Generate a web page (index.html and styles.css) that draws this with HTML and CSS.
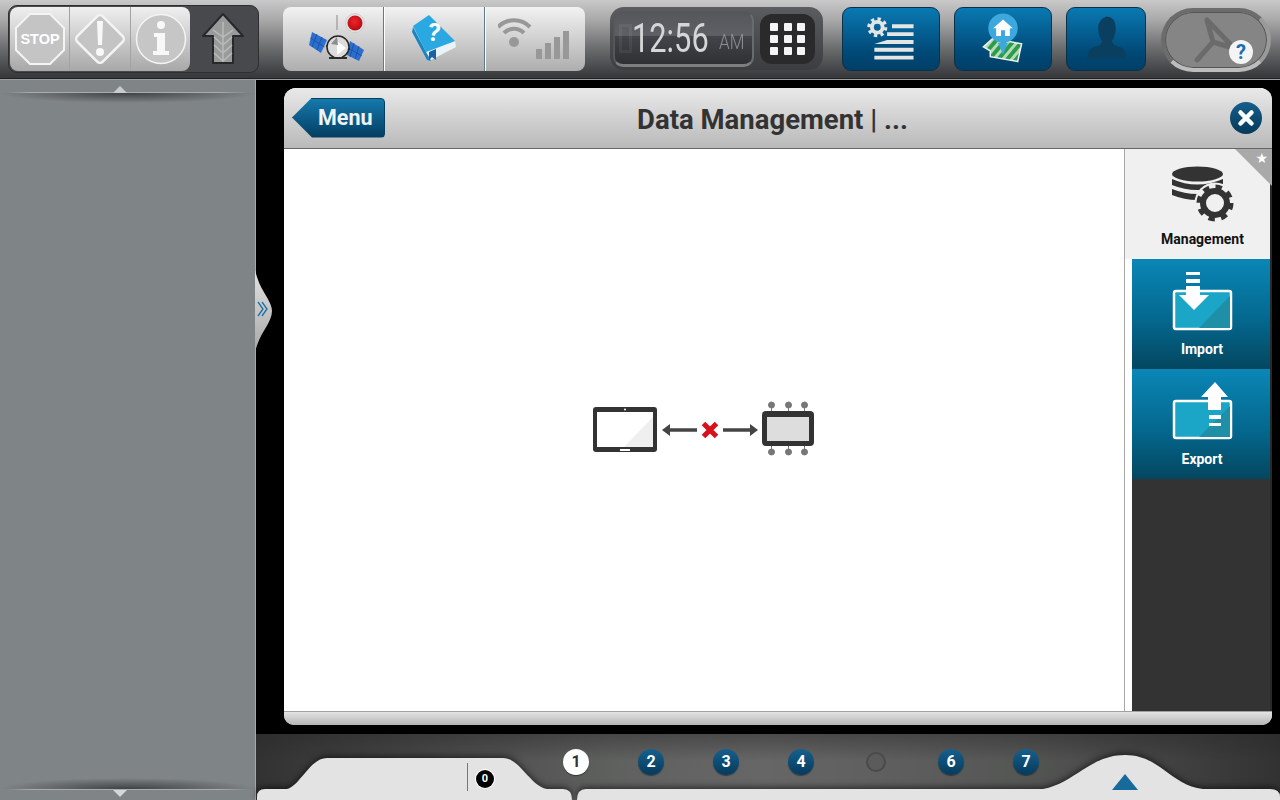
FILE: index.html
```html
<!DOCTYPE html>
<html lang="en">
<head>
  <meta charset="UTF-8" />
  <title>Data Management</title>
  <link rel="stylesheet" href="styles.css">
</head>
<body>
  <div class="app">
    <!-- Top toolbar -->
    <header class="topbar">
      <div class="alerts">
        <div class="alerts-light">
          <div class="alert-cell">
            <svg width="56" height="56" viewBox="0 0 56 56">
              <polygon points="18,3 38,3 52,17 52,39 38,53 18,53 4,39 4,17" fill="#c4c4c4" stroke="#f4f4f4" stroke-width="2"/>
              <text x="28" y="33" class="stop-text">STOP</text>
            </svg>
          </div>
          <div class="alert-cell">
            <svg width="56" height="56" viewBox="0 0 56 56">
              <rect x="10" y="10" width="36" height="36" rx="4" transform="rotate(45 28 28)" fill="#c4c4c4" stroke="#f4f4f4" stroke-width="2.5"/>
              <path d="M25 10h6l-1 24h-4z" fill="#f8f8f8"/>
              <circle cx="28" cy="41" r="4" fill="#f8f8f8"/>
            </svg>
          </div>
          <div class="alert-cell">
            <svg width="56" height="56" viewBox="0 0 56 56">
              <circle cx="29" cy="28" r="24.5" fill="#c6c6c6" stroke="#f4f4f4" stroke-width="1.5"/>
              <circle cx="29" cy="14" r="4" fill="#f8f8f8"/>
              <path d="M22 22h11v18h4v4H21v-4h4V26h-3z" fill="#f8f8f8"/>
            </svg>
          </div>
        </div>
        <div class="alert-arrow">
          <svg width="44" height="54" viewBox="0 0 44 54">
            <path d="M22 2 42 24H32V51H12V24H2Z" fill="#999b9b" stroke="#27282a" stroke-width="2" stroke-linejoin="round"/>
            <path d="M22 10v40M13 25l9 8 9-8M13 33l9 8 9-8M13 41l9 8 9-8M12 18l10 7 10-7" fill="none" stroke="#b9bbbb" stroke-width="1.5"/>
          </svg>
        </div>
      </div>

      <div class="status">
        <div class="status-cell">
          <svg width="75" height="60" viewBox="296 9 75 60">
            <defs>
              <radialGradient id="recDot" cx=".45" cy=".4" r=".6">
                <stop offset="0" stop-color="#f0242c"/>
                <stop offset="1" stop-color="#b50a12"/>
              </radialGradient>
            </defs>
            <polygon points="312,32 327,40 321,53 309,45" fill="#2a6fd0"/>
            <path d="M317 34l-5 13M322 37l-5 13M310.500 38l14 9" stroke="#1b4c96" stroke-width=".8"/>
            <polygon points="350,41 364,50 359,61 347,55" fill="#2a6fd0"/>
            <path d="M354 43l-4 14M359 46l-4 13M348 48l14 8" stroke="#1b4c96" stroke-width=".8"/>
            <path d="M326 46l24 3" stroke="#333" stroke-width="2"/>
            <circle cx="338" cy="47" r="11" fill="#dcdcdc" stroke="#262626" stroke-width="1.500"/>
            <path d="M329 57h18v2h-18z" fill="#2c2c2c"/>
            <path d="M337 41l9 7-9 7z" fill="#fff"/>
            <path d="M331 44l6-7 1 8z" fill="#8d8d8d"/>
            <path d="M337 15v15" stroke="#888"/>
            <circle cx="355" cy="23" r="9.500" fill="#e2e2e2" stroke="#bbb" stroke-width=".5"/>
            <circle cx="355" cy="23" r="7.500" fill="url(#recDot)"/>
          </svg>
        </div>
        <div class="status-cell">
          <svg width="75" height="60" viewBox="396 9 75 60">
            <polygon points="425,52 430,60 455,47 454,41" fill="#e8f4fa"/>
            <polygon points="412,27 425,52 430,61 426,60 411,32" fill="#1a86bf"/>
            <polygon points="412,26 428,15 454,41 425,52" fill="#2aa8e2"/>
            <polygon points="428,52 435,49 435,60 431,57 428,60" fill="#1a62a5"/>
            <text x="433" y="41" class="book-mark" transform="rotate(8 433 33)">?</text>
          </svg>
        </div>
        <div class="status-cell">
          <svg width="75" height="60" viewBox="497 9 75 60">
            <circle cx="513" cy="42" r="5" fill="#989898"/>
            <path d="M503 33a14 14 0 0 1 20 0M497 27a22.500 22.500 0 0 1 32 0" fill="none" stroke="#989898" stroke-width="4"/>
            <path d="M535 49h6v10h-6zM544 43h6v16h-6zM553 37h6v22h-6zM562 31h6v28h-6z" fill="#989898"/>
          </svg>
        </div>
      </div>

      <div class="clock">
        <div class="clock-screen">
          <span class="clock-ghost"></span>
          <span class="clock-time">12:56</span>
          <span class="clock-ampm">AM</span>
        </div>
        <div class="clock-grid">
          <i></i><i></i><i></i><i></i><i></i><i></i><i></i><i></i><i></i>
        </div>
      </div>

      <div class="tool tool-wide">
        <svg width="98" height="64" viewBox="842 7 98 64">
          <circle cx="877" cy="27" r="5.500" fill="none" stroke="#e4e6e6" stroke-width="4"/>
          <circle cx="877" cy="27" r="8.500" fill="none" stroke="#e4e6e6" stroke-width="3.500" stroke-dasharray="3.300 3.370"/>
          <path d="M892 24h22v4h-22zM887 32h27v4h-27zM874 44l13-4h27v4zM874 48h40v4h-40zM874 56h40v4h-40z" fill="#e4e6e6"/>
        </svg>
      </div>
      <div class="tool tool-wide">
        <svg width="98" height="64" viewBox="954 7 98 64">
          <defs>
            <pattern id="mapStripes" width="7" height="7" patternUnits="userSpaceOnUse" patternTransform="rotate(40)">
              <rect width="7" height="7" fill="#2c9c4c"/>
              <rect width="3" height="7" fill="#b4dcb8"/>
            </pattern>
          </defs>
          <polygon points="983,47 993,38 1022,44 1018,62 990,57 990,51" fill="url(#mapStripes)" stroke="#f2f2f2" stroke-width="1.500"/>
          <path d="M998 43h10l-5 12z" fill="#3da8de"/>
          <circle cx="1003" cy="28" r="15" fill="#3da8de"/>
          <path d="M1003 19l-10 9h3v8h5v-6h4v6h5v-8h3z" fill="#fff"/>
        </svg>
      </div>
      <div class="tool tool-narrow">
        <svg width="80" height="64" viewBox="1066 7 80 64">
          <path d="M1087 59q0-11 11-13 3-1 4-5-4-5-4-13 0-10 9-12 9 1 9 12 0 8-4 13 1 4 4 5 11 2 11 13z" fill="#0b3f60"/>
        </svg>
      </div>
      <div class="round-btn">
        <svg width="110" height="64" viewBox="1161 8 110 64">
          <path d="M1207 20l6 22-16 18M1213 42l20 6M1207 20l26 27" fill="none" stroke="#6b6b6b" stroke-width="5" stroke-linecap="round" stroke-linejoin="round"/>
          <circle cx="1241" cy="52" r="12" fill="#f4f4f4"/>
          <text x="1241" y="59" class="help-mark">?</text>
        </svg>
      </div>
    </header>

    <div class="lower">
      <!-- Left sidebar, empty -->
      <aside class="sidebar">
        <div class="rule rule-top"></div>
        <div class="rule rule-bottom"></div>
      </aside>

      <main class="work">
        <svg class="handle" width="18" height="82" viewBox="0 0 18 82">
          <defs>
            <linearGradient id="handleFill" x1="0" y1="0" x2="0" y2="1">
              <stop offset="0" stop-color="#e2e2e2"/>
              <stop offset="1" stop-color="#a8a8a8"/>
            </linearGradient>
          </defs>
          <path d="M0 0Q3 13 10 24 17 35 17 41 17 48 10 59 3 70 0 82Z" fill="url(#handleFill)"/>
          <path d="M3 32l5 7-5 7M7 32l5 7-5 7" fill="none" stroke="#1a6fa5" stroke-width="1.300"/>
        </svg>

        <section class="panel">
          <div class="panel-head">
            <div class="menu-btn">Menu</div>
            <h1 class="panel-title">Data Management | ...</h1>
            <div class="close-btn">
              <svg width="32" height="32" viewBox="0 0 32 32">
                <path d="M10.500 10.500l11 11M21.500 10.500l-11 11" stroke="#fff" stroke-width="4.500" stroke-linecap="round"/>
              </svg>
            </div>
          </div>

          <div class="panel-body">
            <div class="canvas">
              <svg width="224" height="58" viewBox="592 401 224 58">
                <rect x="593" y="407" width="64" height="45" rx="3" fill="#333"/>
                <rect x="597" y="412" width="56" height="35" fill="#fff"/>
                <polygon points="653,417 653,447 624,447" fill="#efefef"/>
                <circle cx="625" cy="409.500" r="1" fill="#fff"/>
                <rect x="620" y="449" width="10" height="2" fill="#fff"/>
                <path d="M697 430h-30" stroke="#444" stroke-width="3.500"/>
                <path d="M662 430l8-6v12z" fill="#444"/>
                <path d="M703.500 423.500l13 13M716.500 423.500l-13 13" stroke="#d8101c" stroke-width="5"/>
                <path d="M723 430h30" stroke="#444" stroke-width="3.500"/>
                <path d="M758 430l-8-6v12z" fill="#444"/>
                <rect x="762" y="411" width="52" height="35" rx="4" fill="#333"/>
                <rect x="767" y="417" width="42" height="24" fill="#ddd"/>
                <g fill="#777" stroke="#777">
                  <circle cx="771.500" cy="405" r="3"/><circle cx="788.500" cy="405" r="3"/><circle cx="804.500" cy="405" r="3"/>
                  <circle cx="771.500" cy="452" r="3"/><circle cx="788.500" cy="452" r="3"/><circle cx="804.500" cy="452" r="3"/>
                  <path d="M771.500 405v6M788.500 405v6M804.500 405v6M771.500 446v6M788.500 446v6M804.500 446v6"/>
                </g>
              </svg>
            </div>

            <nav class="side">
              <div class="side-main">
                <span class="corner"></span>
                <span class="corner-star">★</span>
                <svg width="65" height="60" viewBox="1170 164 65 60">
                  <ellipse cx="1197.500" cy="174" rx="25.500" ry="7.500" fill="#333"/>
                  <path d="M1172 179q25 11 51 0v6q-26 10-51 0z" fill="#333"/>
                  <path d="M1172 189q25 10 51 0v6q-26 10-51 0z" fill="#333"/>
                  <circle cx="1215" cy="203" r="20.500" fill="#f0f0f0"/>
                  <circle cx="1215" cy="203" r="12" fill="none" stroke="#333" stroke-width="6"/>
                  <circle cx="1215" cy="203" r="16" fill="none" stroke="#333" stroke-width="5" stroke-dasharray="6.300 6.270"/>
                </svg>
                <span class="side-label">Management</span>
              </div>
              <div class="side-list">
                <div class="side-item">
                  <svg width="70" height="62" viewBox="1166 270 70 62">
                    <rect x="1173" y="291" width="57" height="38" rx="2" fill="#1ba5c7" stroke="#fff" stroke-width="2.500"/>
                    <polygon points="1229,296 1229,328 1198,328" fill="#1f8fa8"/>
                    <path d="M1185 272h14v3h-14zM1185 279h14v4h-14zM1185 286h14v9h9l-15 15-15-15h7z" fill="#fff"/>
                  </svg>
                  <span class="side-label">Import</span>
                </div>
                <div class="side-item">
                  <svg width="70" height="62" viewBox="1166 380 70 62">
                    <rect x="1173" y="401" width="57" height="37" rx="2" fill="#1ba5c7" stroke="#fff" stroke-width="2.500"/>
                    <polygon points="1229,406 1229,437 1198,437" fill="#1f8fa8"/>
                    <path d="M1214 382l13 15h-7v13h-13v-13h-7z" fill="#fff"/>
                    <path d="M1208 415h12v4h-12zM1208 423h12v3h-12z" fill="#fff"/>
                  </svg>
                  <span class="side-label">Export</span>
                </div>
                <div class="side-rest"></div>
              </div>
            </nav>
          </div>

          <div class="panel-foot"></div>
        </section>

        <!-- Bottom dock with page numbers -->
        <footer class="dock">
          <svg class="dock-tabs" width="1024" height="66" viewBox="256 734 1024 66">
            <path d="M257 800v-3q0-8 8-8h22c13-3 23-31 40-31H503c17 0 27 28 44 31h16q9 0 9 11z" fill="#e3e3e3"/>
            <path d="M577 800q0-11 9-11h457c32-6 47-34 82-34s45 30 78 34h67q10 0 10 8v3z" fill="#e3e3e3"/>
          </svg>
          <div class="pager">
            <span class="page page-on">1</span>
            <span class="page">2</span>
            <span class="page">3</span>
            <span class="page">4</span>
            <span class="page page-off"></span>
            <span class="page">6</span>
            <span class="page">7</span>
          </div>
          <span class="tab-sep"></span>
          <span class="tab-count">0</span>
          <span class="tab-arrow"></span>
        </footer>
      </main>
    </div>
  </div>
</body>
</html>
```

FILE: styles.css
```css
/* 1. Base */
html, body {
  margin: 0;
  padding: 0;
  background: #000;
  overflow: hidden;
  font-family: Roboto, "Liberation Sans", sans-serif;
  box-sizing: border-box;
}
*, *::before, *::after {
  box-sizing: inherit;
}
svg {
  display: block;
}
.app {
  width: 1280px;
  height: 800px;
  display: flex;
  flex-direction: column;
}

/* 2. Top toolbar */
.topbar {
  height: 80px;
  flex: none;
  display: flex;
  align-items: flex-start;
  padding: 7px 0 0 8px;
  background: linear-gradient(#c9c9c9 0, #a9a9a9 25%, #6a6b6d 62%, #38393c 97%);
  border-bottom: 1px solid #9b9c9d;
  box-shadow: inset 0 -1px 0 #222;
}
.alerts {
  width: 251px;
  height: 68px;
  margin-top: -2px;
  padding: 1px;
  display: flex;
  background: #48494c;
  border: 1px solid #2e2f31;
  border-radius: 9px;
}
.alerts-light {
  width: 180px;
  height: 64px;
  display: flex;
  border-radius: 8px;
  background: linear-gradient(#efefef, #a8a8a8);
}
.alert-cell {
  flex: 1;
  display: flex;
  align-items: center;
  justify-content: center;
  border-left: 1px solid #a3a3a3;
}
.alert-cell:first-child {
  border-left: none;
}
.stop-text {
  font: 700 14.500px "Liberation Sans", sans-serif;
  fill: #fff;
  text-anchor: middle;
}
.alert-arrow {
  flex: 1;
  display: flex;
  align-items: center;
  justify-content: center;
  padding-right: 2px;
}

.status {
  width: 302px;
  height: 64px;
  margin-left: 24px;
  display: flex;
  border-radius: 8px;
  overflow: hidden;
  background: linear-gradient(#f2f2f2, #aeaeae);
}
.status-cell {
  flex: 1;
  display: flex;
  align-items: center;
  justify-content: center;
  border-left: 1px solid #f4f4f4;
  box-shadow: inset 1px 0 0 #fff;
}
.status-cell:first-child {
  border-left: none;
  box-shadow: none;
}
.status-cell + .status-cell {
  border-left-color: #5d7d8e;
}
.book-mark {
  font: 700 25px Roboto, sans-serif;
  fill: #fff;
  text-anchor: middle;
}

.clock {
  width: 213px;
  height: 63px;
  margin-left: 25px;
  padding: 6px 8px 5px 3px;
  display: flex;
  justify-content: space-between;
  align-items: center;
  border-radius: 14px;
  background: linear-gradient(#5b5c5f, #3c3d40);
}
.clock-screen {
  position: relative;
  width: 141px;
  height: 56px;
  display: flex;
  align-items: center;
  padding-left: 17px;
  border: 2px solid #56575a;
  border-bottom: 3px solid #7d7e80;
  border-right-color: #6a6b6e;
  border-radius: 10px;
  background: linear-gradient(#55575b 0, #5e6065 44%, #44454a 45%, #2f3033 100%);
}
.clock-ghost {
  position: absolute;
  left: 4px;
  top: 11px;
  width: 13px;
  height: 29px;
  border: 3px solid rgba(255, 255, 255, 0.06);
}
.clock-time {
  width: 78px;
  font-size: 40px;
  line-height: 40px;
  font-weight: 400;
  color: #d4d6d7;
  white-space: nowrap;
  transform: scaleX(0.77);
  transform-origin: left center;
}
.clock-ampm {
  margin: 6px 0 0 9px;
  font-size: 20px;
  line-height: 20px;
  font-weight: 300;
  color: #8d8f92;
  transform: scaleX(0.85);
  transform-origin: left center;
}
.clock-grid {
  width: 55px;
  height: 50px;
  padding: 9px 10px;
  display: grid;
  grid-template-columns: repeat(3, 8px);
  grid-template-rows: repeat(3, 8px);
  justify-content: space-between;
  align-content: space-between;
  background: #2a2a2c;
  border-radius: 12px;
}
.clock-grid i {
  display: block;
  background: #f4f4f4;
  border-radius: 1px;
}

.tool {
  height: 64px;
  border: 1px solid #0c3147;
  border-radius: 9px;
  background: linear-gradient(#0a79b2, #004a78 70%, #003f67);
  display: flex;
  align-items: center;
  justify-content: center;
  overflow: hidden;
}
.tool-wide {
  width: 98px;
  margin-left: 14px;
}
.clock + .tool-wide {
  margin-left: 19px;
}
.tool-narrow {
  width: 80px;
  margin-left: 14px;
}
.round-btn {
  width: 110px;
  height: 64px;
  margin: 1px 0 0 15px;
  border-radius: 32px;
  background: #858585;
  border: 4px solid #6c6c6c;
  border-bottom-color: #bdbdbd;
  border-right-color: #9a9a9a;
  box-shadow: inset 0 0 0 1px #555;
  display: flex;
  align-items: center;
  justify-content: center;
}
.round-btn svg {
  flex: none;
}
.help-mark {
  font: 700 20px Roboto, sans-serif;
  fill: #156fb5;
  text-anchor: middle;
}

/* 3. Sidebar */
.lower {
  flex: 1;
  display: flex;
  min-height: 0;
}
.sidebar {
  width: 256px;
  flex: none;
  display: flex;
  flex-direction: column;
  justify-content: space-between;
  background: #7f8487;
  border-right: 1px solid #a4a8aa;
}
.rule {
  position: relative;
  height: 24px;
}
.rule::after {
  content: "";
  position: absolute;
  left: 113px;
  width: 0;
  height: 0;
  border-left: 7px solid transparent;
  border-right: 7px solid transparent;
}
.rule-top {
  background:
    linear-gradient(90deg, transparent 8px, #a9acae 30px, #a9acae 220px, transparent 248px) 0 12px / 100% 1px no-repeat,
    radial-gradient(ellipse 50% 10px at 50% 0, #3f4245, transparent) 0 13px / 100% 11px no-repeat;
}
.rule-top::after {
  top: 6px;
  border-bottom: 7px solid #c9cbcc;
}
.rule-bottom {
  background:
    linear-gradient(90deg, transparent 8px, #a9acae 30px, #a9acae 220px, transparent 248px) 0 13px / 100% 1px no-repeat,
    radial-gradient(ellipse 50% 11px at 50% 100%, #3f4245, transparent) 0 0 / 100% 13px no-repeat;
}
.rule-bottom::after {
  top: 14px;
  border-top: 7px solid #d4d6d7;
}

/* 4. Main panel */
.work {
  position: relative;
  flex: 1;
  display: flex;
  flex-direction: column;
}
.handle {
  position: absolute;
  left: -1px;
  top: 190px;
}
.panel {
  height: 637px;
  margin: 8px 8px 9px 28px;
  display: flex;
  flex-direction: column;
  border-radius: 12px 12px 10px 10px;
  overflow: hidden;
  background: #fff;
}
.panel-head {
  height: 61px;
  flex: none;
  display: grid;
  grid-template-columns: auto 1fr auto;
  align-items: center;
  padding: 0 10px 1px 8px;
  background: linear-gradient(#e9e9e9, #b9b9b9);
  border-bottom: 1px solid #666;
}
.menu-btn {
  grid-area: 1 / 1;
  width: 93px;
  height: 40px;
  padding-left: 25px;
  font-size: 21.500px;
  font-weight: 700;
  line-height: 38px;
  color: #eef3f6;
  border: 1px solid #07405f;
  border-radius: 4px;
  background: linear-gradient(#1579ad, #043e62);
  clip-path: polygon(20px 0, 100% 0, 100% 100%, 20px 100%, 0 50%);
}
.panel-title {
  grid-area: 1 / 1 / 1 / 4;
  margin: 0;
  padding: 3px 9px 0 0;
  text-align: center;
  font-size: 27.500px;
  font-weight: 700;
  color: #333;
}
.close-btn {
  grid-area: 1 / 3;
  width: 32px;
  height: 32px;
  border-radius: 50%;
  background: linear-gradient(#155f8c, #06395a);
}
.panel-body {
  flex: 1;
  display: flex;
  min-height: 0;
}
.canvas {
  flex: 1;
  display: flex;
  align-items: center;
  justify-content: center;
}
.side {
  width: 148px;
  flex: none;
  display: flex;
  flex-direction: column;
  border-left: 1px solid #a8a8a8;
  border-right: 2px solid #2a2a2a;
}
.side-main {
  position: relative;
  height: 110px;
  flex: none;
  padding: 15px 0 0 10px;
  display: flex;
  flex-direction: column;
  align-items: center;
  background: #f0f0f0;
}
.side-main .side-label {
  margin-top: 7px;
  color: #111;
}
.corner {
  position: absolute;
  right: -2px;
  top: 0;
  width: 37px;
  height: 37px;
  background: #a9a9a9;
  clip-path: polygon(0 0, 100% 0, 100% 100%);
}
.corner-star {
  position: absolute;
  right: 2px;
  top: 1px;
  font: 14px "DejaVu Sans", sans-serif;
  color: #fff;
}
.side-label {
  font-size: 14px;
  line-height: 16px;
  font-weight: 700;
  color: #fff;
}
.side-list {
  flex: 1;
  margin-left: 7px;
  display: flex;
  flex-direction: column;
  background: #333;
}
.side-item {
  height: 110px;
  flex: none;
  padding: 11px 0 0 1px;
  display: flex;
  flex-direction: column;
  align-items: center;
  background: linear-gradient(#0a86b6, #04688f 55%, #04465f);
}
.side-item .side-label {
  margin-top: 9px;
  padding-left: 1px;
}
.panel-foot {
  height: 14px;
  flex: none;
  background: linear-gradient(#e4e4e4, #b4b4b4);
  border-top: 1px solid #a0a0a0;
}

/* 5. Bottom dock */
.dock {
  position: relative;
  height: 66px;
  flex: none;
  background:
    linear-gradient(rgba(40, 40, 40, 0.45), transparent 40%),
    linear-gradient(90deg, #323232 0, #5f615f 35%, #666 50%, #545654 75%, #323232 100%);
}
.dock-tabs {
  position: absolute;
  left: 0;
  top: 0;
  filter: drop-shadow(0 -2px 3px rgba(0, 0, 0, 0.55));
}
.pager {
  position: relative;
  display: flex;
  gap: 49px;
  padding: 15px 0 0 307px;
}
.page {
  width: 26px;
  height: 26px;
  border-radius: 50%;
  text-align: center;
  font-size: 16px;
  font-weight: 700;
  line-height: 26px;
  color: #fff;
  background: linear-gradient(#15618e, #063a5c);
  box-shadow: 0 1px 1px rgba(0, 0, 0, 0.4);
}
.page-on {
  color: #333;
  background: #fff;
}
.page-off {
  width: 20px;
  height: 20px;
  margin: 3px;
  background: #5b5b5b;
  border: 2px solid #4a4a4a;
  box-shadow: none;
}
.tab-sep {
  position: absolute;
  left: 211px;
  top: 29px;
  width: 1px;
  height: 28px;
  background: #777;
}
.tab-count {
  position: absolute;
  left: 220px;
  top: 36px;
  width: 18px;
  height: 18px;
  border-radius: 50%;
  background: #000;
  color: #fff;
  text-align: center;
  font-size: 11px;
  font-weight: 700;
  line-height: 18px;
  box-shadow: 0 0 0 1px #fff;
}
.tab-arrow {
  position: absolute;
  left: 856px;
  top: 40px;
  width: 0;
  height: 0;
  border-left: 13px solid transparent;
  border-right: 13px solid transparent;
  border-bottom: 16px solid #166a9c;
}
```
